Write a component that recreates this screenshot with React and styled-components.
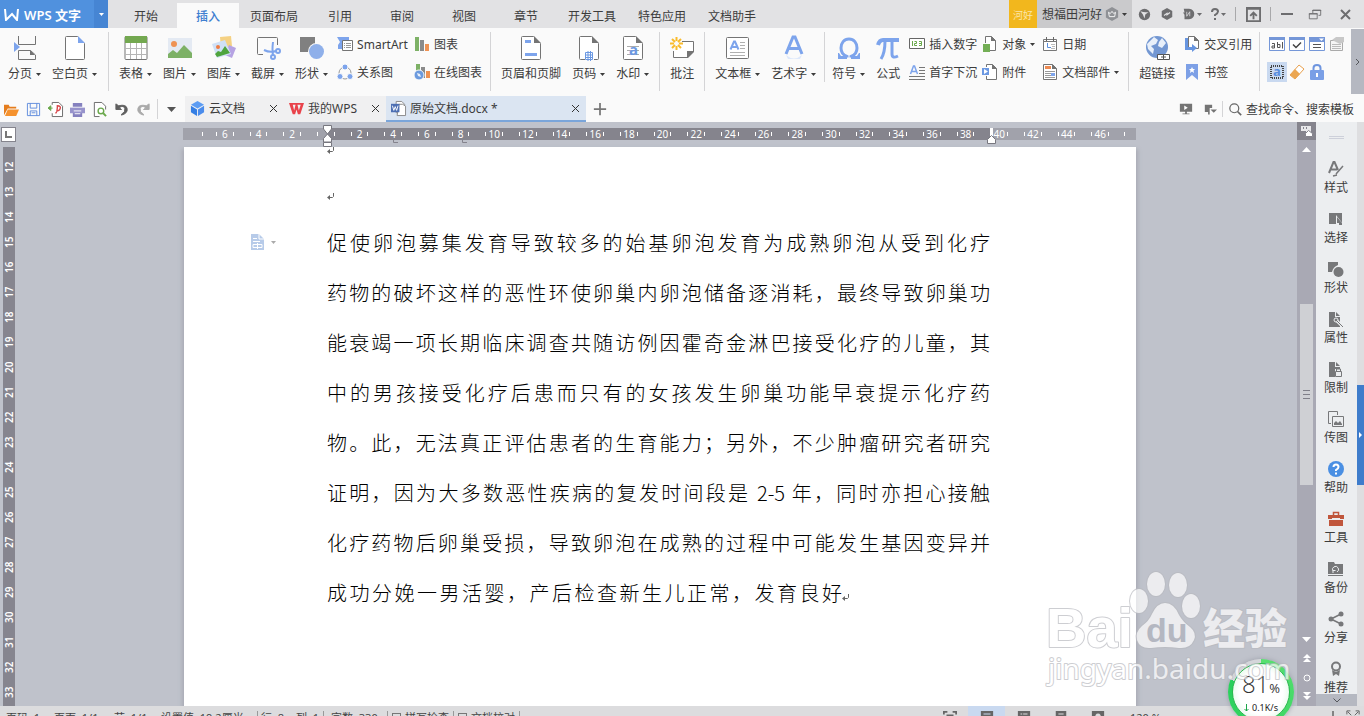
import React, { useState } from 'react'
import styled, { createGlobalStyle } from 'styled-components'

const GlobalStyle = createGlobalStyle`
    * {
        box-sizing: border-box;
    }
    body {
        margin: 0;
        overflow: hidden;
        font-family: "Noto Sans", "Noto Sans CJK SC", sans-serif;
        font-size: 12px;
        color: #3c3c3c;
    }
    button, input {
        font: inherit;
        color: inherit;
        background: none;
        border: 0;
        padding: 0;
        margin: 0;
    }
    svg {
        display: block;
        flex: none;
    }
`

// layout
const Shell = styled.div`
    display: flex;
    flex-direction: column;
    height: 100vh;
    overflow: hidden;
    background: #fafafa;
    white-space: nowrap;
`

const Spacer = styled.div`
    flex: 1;
`

// title bar
const TitleBar = styled.header`
    display: flex;
    flex: none;
    height: 28px;
    background: #e2e2e4;
`

const Brand = styled.button`
    display: flex;
    align-items: center;
    gap: 5px;
    width: 94px;
    padding-left: 4px;
    background: #5091de;
    color: #fff;
    font-size: 13px;
    font-weight: 600;
`

const BrandMenu = styled.button`
    display: flex;
    align-items: center;
    justify-content: center;
    width: 14px;
    background: #4685d3;
    color: #fff;
`

const MenuTabs = styled.nav`
    display: flex;
    align-items: flex-end;
    padding-left: 7px;
`

const MenuTab = styled.button`
    height: 25px;
    width: ${props => (props.$long ? 70 : 62)}px;
    background: ${props => (props.$active ? '#fafafa' : 'transparent')};
    color: ${props => (props.$active ? '#3f7fd0' : '#3c3c3c')};
    font-weight: ${props => (props.$active ? 500 : 400)};
`

const Avatar = styled.div`
    display: flex;
    align-items: center;
    justify-content: center;
    width: 28px;
    background: #f2b71d;
    color: #fbe6ab;
    font-size: 10px;
`

const UserButton = styled.button`
    display: flex;
    align-items: center;
    gap: 3px;
    width: 95px;
    padding-left: 5px;
    background: #cacacc;
`

const WindowTools = styled.div`
    display: flex;
    align-items: center;
    color: #6d6d6f;
`

const WindowButton = styled.button`
    display: flex;
    align-items: center;
    justify-content: center;
    gap: 2px;
    height: 28px;
    width: ${props => props.$w || 24}px;
`

const Line = styled.span`
    flex: none;
    width: 1px;
    height: ${props => props.$h}px;
    margin-left: ${props => props.$gap || 0}px;
    background: ${props => props.$tone || '#d4d4d6'};
`

// ribbon
const Ribbon = styled.div`
    display: flex;
    flex: none;
    height: 68px;
    background: #fafafa;
`

const Group = styled.section`
    display: flex;
    margin: 4px 0;
    height: ${props => (props.$short ? 50 : 59)}px;
    padding: ${props => props.$pad || '0 5px'};
    border-right: 1px solid #d4d4d6;
`

const BigButton = styled.button`
    display: flex;
    flex-direction: column;
    align-items: center;
    height: 50px;
    padding: 3px 6px 0 5px;
    gap: 3px;
`

const BigLabel = styled.span`
    display: flex;
    align-items: center;
    gap: 4px;
    height: 20px;
    line-height: 20px;
`

const SmallColumn = styled.div`
    display: flex;
    flex-direction: column;
    gap: 8px;
    width: ${props => props.$w}px;
    padding-top: 2px;
    ${BigButton} + & {
        padding-left: 3px;
    }
`

const SmallButton = styled.button`
    display: flex;
    align-items: center;
    gap: 4px;
    height: 20px;
`

const ControlGrid = styled.div`
    display: grid;
    grid-template-columns: repeat(4, 20px);
    grid-template-rows: 20px 20px;
    row-gap: 8px;
    align-content: start;
    padding: 6px 0 0 7px;
`

const ControlButton = styled.button`
    display: flex;
    align-items: center;
    justify-content: center;
    height: 20px;
    background: ${props => (props.$active ? '#c9d9f0' : 'transparent')};
`

const RibbonMore = styled.button`
    display: flex;
    align-items: center;
    justify-content: center;
    width: 13px;
    height: 65px;
    margin-top: 1px;
    background: #b5b8c1;
    color: #55575c;
`

// quick access row
const QuickBar = styled.div`
    display: flex;
    flex: none;
    align-items: center;
    height: 26px;
`

const QuickTools = styled.div`
    display: flex;
    align-items: center;
    width: 157px;
`

const QuickButton = styled.button`
    display: flex;
    align-items: center;
    justify-content: center;
    width: ${props => props.$w || 22}px;
    height: 26px;
    color: #555;
`

const DocTab = styled.div`
    display: flex;
    align-items: center;
    gap: 4px;
    width: ${props => props.$w}px;
    height: 26px;
    padding: 0 6px 0 5px;
    background: ${props => (props.$active ? '#dbe5f2' : '#f0f0f1')};
    border-bottom: 2px solid ${props => (props.$active ? '#7aa5da' : '#f0f0f1')};
`

const DocTabName = styled.button`
    flex: 1;
    text-align: left;
`

const SearchLabel = styled.label`
    display: flex;
    align-items: center;
    gap: 4px;
    padding: 0 7px 0 6px;
`

const SearchInput = styled.input`
    width: 111px;
    outline: none;
    &::placeholder {
        color: #3c3c3c;
        opacity: 1;
    }
`

// work area
const WorkArea = styled.div`
    position: relative;
    display: flex;
    flex: none;
    height: calc(100vh - 132px);
    background: #bfc2cb;
`

const LeftRail = styled.div`
    display: flex;
    flex-direction: column;
    width: 23px;
    padding-top: 5px;
`

const TabSelector = styled.button`
    display: flex;
    align-items: center;
    justify-content: center;
    width: 15px;
    height: 15px;
    margin-left: 1px;
    background: #fff;
    border: 1px solid #85848d;
`

const VerticalRuler = styled.div`
    flex: 1;
    width: 12px;
    margin: 5px 0 0 3px;
    padding-top: 8px;
    overflow: hidden;
    background: #86858f;
    color: #fff;
    font-size: 10px;
    font-weight: 600;
`

const VerticalNumber = styled.div`
    display: flex;
    align-items: center;
    justify-content: center;
    height: 25px;
    line-height: 12px;
    writing-mode: vertical-rl;
    transform: rotate(180deg);
`

const Canvas = styled.main`
    display: flex;
    flex: 1;
    flex-direction: column;
    align-items: center;
    overflow: hidden;
`

const RulerRow = styled.div`
    position: relative;
    flex: none;
    width: 954px;
    height: 25px;
    padding: 6px 1px 0 0;
`

const Ruler = styled.div`
    display: flex;
    height: 12px;
    background: linear-gradient(to right, #a1a2ab 144px, #85848d 144px, #85848d 808px, #a1a2ab 808px);
    color: #fff;
    font-size: 10px;
    line-height: 12px;
`

const RulerCell = styled.div`
    display: flex;
    flex: 1 1 0;
    align-items: center;
    justify-content: space-between;
    min-width: 0;
    padding: 0 8px;
    & > span {
        display: flex;
        justify-content: center;
        width: 0;
    }
`

const RulerEnd = styled.div`
    display: flex;
    flex: none;
    align-items: center;
    width: ${props => props.$w}px;
    padding-left: ${props => props.$indent}px;
`

const Tick = styled.i`
    flex: none;
    width: 1px;
    height: 4px;
    background: #fff;
`

const RulerMark = styled.div`
    position: absolute;
    top: ${props => props.$top}px;
    left: ${props => props.$left}px;
`

const Paper = styled.article`
    display: flex;
    flex: 1;
    width: 952px;
    background: #fff;
    box-shadow: 0 4px 4px 2px #a9abb5;
`

const Gutter = styled.div`
    width: 143px;
    padding: 87px 0 0 67px;
`

const GutterButton = styled.button`
    display: flex;
    align-items: center;
    gap: 7px;
`

const Story = styled.div`
    width: 663px;
`

const EmptyLine = styled.div`
    display: flex;
    align-items: ${props => (props.$first ? 'flex-start' : 'center')};
    height: ${props => (props.$first ? 28 : 43)}px;
`

const Paragraph = styled.p`
    margin: 0;
    color: #000;
    font-family: "Noto Sans CJK SC", sans-serif;
    font-size: 20px;
    font-weight: 300;
    line-height: 50px;
`

const TextLine = styled.span`
    display: block;
    text-align: justify;
    text-align-last: justify;
`

const LastLine = styled.span`
    display: flex;
    align-items: center;
    & > span {
        width: 515px;
        text-align: justify;
        text-align-last: justify;
    }
    & > svg {
        margin-top: 10px;
    }
`

// scroll bar
const ScrollTrack = styled.div`
    display: flex;
    flex-direction: column;
    align-items: center;
    width: 19px;
    background: #a9a9b4;
    color: #fff;
`

const RulerToggle = styled.button`
    display: flex;
    align-items: center;
    justify-content: center;
    width: 19px;
    height: 18px;
    background: #85848d;
`

const ScrollButton = styled.button`
    display: flex;
    align-items: center;
    justify-content: center;
    width: 19px;
    height: 19px;
`

const ScrollThumb = styled.div`
    display: flex;
    flex: none;
    flex-direction: column;
    align-items: center;
    justify-content: center;
    gap: 3px;
    width: 13px;
    height: 181px;
    margin-top: 145px;
    background: #cfd0d4;
    & > i {
        width: 7px;
        height: 1px;
        background: #808089;
    }
`

// task pane
const SidePane = styled.aside`
    display: flex;
    flex-direction: column;
    width: 41px;
    overflow: hidden;
    background: #eceef0;
`

const PaneHandle = styled.div`
    flex: none;
    align-self: center;
    width: 15px;
    height: 3px;
    margin: 14px 0 18px 0;
    border: solid #cdd0da;
    border-width: 1px 0;
`

const PaneList = styled.div`
    flex: 1;
    min-height: 0;
    overflow: hidden;
`

const PaneButton = styled.button`
    display: flex;
    flex-direction: column;
    align-items: center;
    width: 40px;
    height: 50px;
    padding-top: 4px;
    gap: 3px;
    line-height: 16px;
    color: #77787a;
    & > span {
        color: #3c3c3c;
    }
`

const PaneMore = styled.button`
    display: flex;
    flex: none;
    align-items: center;
    justify-content: center;
    height: 12px;
    background: #b5b8c1;
    color: #55575c;
`

const EdgeStrip = styled.div`
    width: 7px;
    padding-top: 263px;
    background: #dedee0;
`

const EdgeHandle = styled.button`
    display: flex;
    align-items: center;
    justify-content: center;
    width: 7px;
    height: 100px;
    background: #3e7ccb;
    color: #fff;
`

// things that float over the document
const Watermark = styled.div`
    position: absolute;
    right: 64px;
    bottom: 12px;
    z-index: 3;
    opacity: 0.7;
    pointer-events: none;
`

const SpeedBall = styled.div`
    position: absolute;
    right: 70px;
    bottom: -19px;
    z-index: 2;
    display: flex;
    flex-direction: column;
    align-items: center;
    width: 66px;
    height: 66px;
    padding-top: 12px;
    border-radius: 33px;
    background: conic-gradient(#59e070 0deg, #27cf5b 292deg, #d4d6da 292deg);
    box-shadow: 0 0 5px #9b9ea8;
    &::before {
        content: '';
        position: absolute;
        inset: 4px;
        border-radius: 29px;
        background: radial-gradient(#fff 55%, #c9f5d3 100%);
        border: 1px solid #2cb84f;
    }
`

const SpeedPercent = styled.div`
    position: relative;
    font-family: "Open Sans", sans-serif;
    font-size: 24px;
    font-weight: 300;
    line-height: 26px;
    color: #333;
    & > small {
        font-size: 13px;
        font-weight: 400;
    }
`

const SpeedRate = styled.div`
    position: relative;
    display: flex;
    gap: 3px;
    align-items: center;
    font-size: 9px;
    line-height: 14px;
    color: #222;
`

// status bar
const StatusBar = styled.footer`
    display: flex;
    flex: none;
    align-items: center;
    height: 22px;
    padding: 0 4px 0 6px;
    background: #dcdcde;
    font-size: 11px;
    color: #444;
`

const StatusText = styled.span`
    width: ${props => props.$w}px;
    margin-left: ${props => props.$gap || 0}px;
`

const StatusCheck = styled.button`
    display: flex;
    align-items: center;
    gap: 4px;
    padding: 0 4px;
    &::before {
        content: '';
        width: 7px;
        height: 7px;
        border: 1px solid #777;
    }
`

const ViewButton = styled.button`
    display: flex;
    align-items: center;
    justify-content: center;
    width: 37px;
    height: 22px;
    color: #666;
    background: ${props => (props.$active ? '#c9d9f0' : 'transparent')};
`

const ZoomButton = styled.button`
    margin-right: 6px;
`

const Caret = ({ size = 5 }) => (
    <svg width={size} height={Math.ceil(size / 2)} viewBox="0 0 6 3" preserveAspectRatio="none" fill="currentColor">
        <path d="M0 0h6L3 3z" />
    </svg>
)

const Close = () => (
    <svg width="9" height="9" viewBox="0 0 9 9" stroke="#333" fill="none">
        <path d="M1 1l7 7M8 1l-7 7" />
    </svg>
)

const ReturnMark = () => (
    <svg width="8" height="8" viewBox="0 0 8 8" fill="none" stroke="#666">
        <path d="M6.500 0v3.500L5.500 4.500H1" />
        <path d="M3 2v5L0 4.500z" fill="#666" stroke="none" />
    </svg>
)

const BLUE = '#7da4ec'
const GREY = '#747474'

// 24 x 26 drawings of the large ribbon buttons
const bigIcons = {
    pageBreak: <>
        <path d="M5.500 1v8.500h17V1M5.500 24.500v-9h12l5 4.500v4.500z" fill="none" stroke={GREY} />
        <path d="M17 15v5h5z" fill={GREY} />
        <path d="M1 7l6 5-6 5z" fill={BLUE} />
    </>,
    blank: <>
        <path d="M3.500 1.500h11l7 7v15q0 1-1 1h-17q-1 0-1-1v-21q0-1 1-1z" fill="#fff" stroke={GREY} />
        <path d="M15 1v7h7z" fill={BLUE} />
    </>,
    table: <>
        <rect x="1" y="1.500" width="22" height="23" rx="1" fill="#fff" stroke={GREY} />
        <path d="M1 1h22v7H1z" fill="#73a850" />
        <path d="M1 13.500h22M1 19.500h22M6.500 8v16M12.500 8v16M17.500 8v16" stroke="#b5b5b5" />
    </>,
    picture: <>
        <path d="M0 3h24v20H0z" fill="#e4eaf3" />
        <circle cx="6" cy="9" r="3" fill="#ee9253" />
        <path d="M0 23v-4l5-4 4 3 7-8 8 8v5z" fill="#7db166" />
    </>,
    gallery: <>
        <path d="M8 2l11-1 1 10-11 3z" fill="#f5d183" />
        <path d="M17 10l7 3-4 10-7-3z" fill="#b6a3e3" />
        <path d="M0 9l13-4 6 14-14 4z" fill="#cfe0f6" />
        <circle cx="6" cy="12" r="2" fill="#ee7b43" />
        <path d="M3 19l3-3 3 1 4-6 5 7-13 4z" fill="#4fa43e" />
    </>,
    capture: <>
        <path d="M7 19.500H2.500q-1 0-1-1v-15q0-1 1-1h18q1 0 1 1V10" fill="none" stroke={GREY} />
        <g fill="none" stroke={BLUE} strokeWidth="2">
            <path d="M8 15q6 3 12 1M17 7q-1 8 0 13" />
            <circle cx="17" cy="22" r="2" />
            <circle cx="22" cy="16" r="2" />
        </g>
    </>,
    shapes: <>
        <path d="M0 2h15v15H0z" fill="#808080" />
        <circle cx="16.500" cy="16.500" r="8.500" fill="#fafafa" />
        <circle cx="16.500" cy="16.500" r="7.500" fill="#8fb0ea" />
    </>,
    headerFooter: <>
        <path d="M3.500 1.500h11l7 7v15q0 1-1 1h-17q-1 0-1-1v-21q0-1 1-1z" fill="#fff" stroke={GREY} />
        <path d="M15 1v7h7z" fill={GREY} />
        <path d="M6 5h6v3H6zM6 18h12v3H6z" fill={BLUE} />
    </>,
    pageNumber: <>
        <path d="M8 24.500H3.500q-1 0-1-1v-21q0-1 1-1h11l7 7v15q0 1-1 1H17" fill="#fff" stroke={GREY} />
        <path d="M15 1v7h7z" fill={GREY} />
        <path d="M8.500 17.500h7v7h-7zM11 16v10M13.500 16v10M8 20h8M8 22.500h8" fill="none" stroke="#6b98e2" />
    </>,
    stamp: <>
        <path d="M3.500 1.500h11l7 7v15q0 1-1 1h-17q-1 0-1-1v-21q0-1 1-1z" fill="#fff" stroke={GREY} />
        <path d="M15 1v7h7z" fill={GREY} />
        <path d="M6 11.500h12M6 15.500h12M6 19.500h12" stroke="#ababab" />
        <text x="8" y="20" fontSize="15" fontWeight="700" fontFamily="Noto Sans" fill="#6b98e2">a</text>
    </>,
    comment: <>
        <path d="M12 6.500h11.500v10l-6 6H3.500V16" fill="#fff" stroke={GREY} />
        <path d="M24 16v1l-6 6h-1v-7z" fill={GREY} />
        <path d="M6.500 2v4M6.500 11v4M0 8.500h4M9 8.500h4M2 4l3 3M8 10l3 3M11 4L8 7M5 10l-3 3" stroke="#f9bb2c" strokeWidth="2" />
    </>,
    textBox: <>
        <rect x=".5" y="2.500" width="22" height="21" rx="1" fill="#fff" stroke={GREY} />
        <path d="M14 7.500h5M14 10.500h5M14 13.500h5M4 17.500h15M4 20.500h15" stroke="#b0b0b0" />
        <path d="M4.500 14.500l3.500-8h1l3.500 8M6 12h5" fill="none" stroke={BLUE} strokeWidth="2" />
    </>,
    wordArt: <>
        <path d="M4 19L11 2h2l7 17M7 13.500h10" fill="none" stroke={BLUE} strokeWidth="3" />
        <path d="M4 20q8 7 16 0l-2 4H6z" fill="#dde8fb" />
    </>,
    symbol: <>
        <path d="M10 22.500v-1C6 20 4 17 4 13c0-5 3-9 8-9s8 4 8 9c0 4-2 7-6 8.500v1" fill="none" stroke={BLUE} strokeWidth="3" />
        <path d="M1 18h1l2 3h6v3H1zM23 18h-1l-2 3h-6v3h9z" fill={BLUE} />
    </>,
    formula: <>
        <path d="M2 10Q3.500 5 7 5h16" fill="none" stroke={BLUE} strokeWidth="4" />
        <path d="M9 6q0 12-4 18M16 6v13q0 5 6 2" fill="none" stroke={BLUE} strokeWidth="3" />
    </>,
    hyperlink: <>
        <circle cx="12" cy="12" r="11" fill="#7397d2" />
        <path d="M9 2l4 3-2 4-5 2 3 3-1 5-5-5-1-5zM17 3l4 5-4 5-4-2 1-4z" fill="#e9f0fa" />
        <path d="M12.500 19.500h6v5h-6zM18.500 19.500h6v5h-6zM16 22h5" fill="#fff" stroke="#555" />
    </>,
}

// 16 x 16 drawings
const smallIcons = {
    smartArt: <>
        <path d="M0 1h12v3H7L5 9v4H1V9l2-3z" fill={BLUE} />
        <path d="M5.500 4.500h10v10h-10z" fill="#fff" stroke={GREY} />
        <path d="M7 7.500h1M9 7.500h5M7 9.500h1M9 9.500h5M7 11.500h1M9 11.500h5" stroke="#999" />
    </>,
    relation: <>
        <circle cx="8" cy="9" r="6" fill="none" stroke="#999" />
        <g fill={BLUE} stroke="#fafafa"><circle cx="8" cy="3" r="3" /><circle cx="3" cy="12.500" r="3" /><circle cx="13" cy="12.500" r="3" /></g>
    </>,
    chart: <>
        <path d="M1 1h4v14H1z" fill="#7db166" /><path d="M6 4h4v11H6z" fill="#8a8a8a" /><path d="M11 8h4v7h-4z" fill="#ee9253" />
    </>,
    onlineChart: <>
        <path d="M2 0h4v14H2z" fill="#7db166" /><path d="M7 3h4v11H7z" fill="#8a8a8a" /><path d="M12 7h4v7h-4z" fill="#ee9253" />
        <circle cx="5" cy="11" r="5" fill="#6b9ade" stroke="#fafafa" />
        <path d="M3 9l3 1 1 3-3-1z" fill="#e9f0fa" />
    </>,
    number: <>
        <path d="M.5 2.500h15v10H.5z" fill="#fff" stroke="#666" />
        <path d="M3.500 5v5M5.500 5.500h2v2h-2v2h2.500M10 5.500h2.500v4H10M10 7.500h2" fill="none" stroke="#6aa84b" />
    </>,
    dropCap: <>
        <path d="M1.500 10l3-8h1l3 8M3 7.500h4" fill="none" stroke={BLUE} strokeWidth="1.500" />
        <path d="M10 3.500h6M10 6.500h6M10 9.500h6M0 12.500h16M0 15.500h16" stroke="#777" />
    </>,
    object: <>
        <path d="M3.500 7V.5h6l4 4v10H8" fill="#fff" stroke={GREY} /><path d="M9 0v5h5z" fill={GREY} />
        <path d="M1 8h7v8H1z" fill="#73ae55" />
    </>,
    attach: <>
        <path d="M4.500 3V.5h6l4 4v11h-10V12" fill="#fff" stroke={GREY} /><path d="M10 0v5h5z" fill={GREY} />
        <path d="M0 4h7v7H0z" fill="#6b98e2" /><path d="M2 5l4 2.500L2 10z" fill="#fff" />
    </>,
    date: <>
        <path d="M1.500 3.500h13v11h-13zM1 5.500h14" fill="#fff" stroke="#777" /><path d="M4.500 1v4M11.500 1v4" stroke="#666" />
        <path d="M5.500 7v4.500H9" fill="none" stroke="#5b8fdd" /><path d="M9 8.500h4M10 10.500h3M9 12.500h4" stroke="#bbb" />
    </>,
    docParts: <>
        <path d="M1.500.5h9l4 4v11h-13z" fill="#fff" stroke={GREY} /><path d="M10 0v5h5z" fill={GREY} />
        <path d="M3 2h6v3H3z" fill="#ee8a52" /><path d="M3 7.500h10M3 9.500h6M3 11.500h6M3 13.500h10" stroke="#999" /><path d="M9 9h4v3H9z" fill={BLUE} />
    </>,
    crossRef: <>
        <path d="M4.500.5h6l4 4v8h-10z" fill="#fff" stroke={GREY} /><path d="M10 0v5h5z" fill={GREY} />
        <path d="M1 2h3v9h4V8l5 4-5 4v-2H1z" fill="#6795e0" />
    </>,
    bookmark: <>
        <path d="M2 0h12v16l-6-5-6 5z" fill="#7da0e6" /><path d="M8 3l1 2h2L9.500 6.500 10 9 8 7.500 6 9l.5-2.500L5 5h2z" fill="#fff" />
    </>,
    editField: <>
        <path d="M.5 1.500h15v13H.5z" fill="#fff" stroke="#7597d8" /><path d="M0 1h16v3H0z" fill="#7597d8" />
        <path d="M3 7.500h2.500V12H3v-2h2M8.500 6v5.500H11v-3H9M13.500 6v6.500" fill="none" stroke="#555" />
    </>,
    checkField: <>
        <path d="M.5 1.500h15v13H.5z" fill="#fff" stroke="#7597d8" /><path d="M0 1h16v3H0z" fill="#7597d8" />
        <path d="M4 8.500l3 3 5-5" fill="none" stroke="#444" strokeWidth="1.500" />
    </>,
    listField: <>
        <path d="M.5 1.500h15v13H.5z" fill="#fff" stroke="#7597d8" /><path d="M0 1h16v5H0z" fill="#7597d8" /><path d="M10 2.500h5l-2.500 2.500z" fill="#fff" />
        <path d="M4 8.500h8M4 11.500h8" stroke="#555" />
    </>,
    fieldOptions: <>
        <path d="M1.500 4.500h12v10h-12z" fill="#f6f6f6" stroke="#aaa" /><path d="M3 8.500h9M3 10.500h9M3 12.500h9" stroke="#bbb" />
        <path d="M3 4l4-3h8v5l-4 2z" fill="#c8c8c8" />
    </>,
    shadeField: <>
        <rect x="2" y="2" width="12" height="12" fill="none" stroke="#444" strokeWidth="2" strokeDasharray="1 1" />
        <text x="4" y="12" fontSize="13" fontFamily="Noto Sans" fontWeight="700" fill="#5a8ddd">a</text>
    </>,
    eraser: <>
        <path d="M10 1l5 4-9 10-5-4z" fill="#fff" stroke="#e9a04c" /><path d="M6 5l5 5-5 5-5-4z" fill="#eba652" />
    </>,
    lock: <>
        <path d="M4.500 8V4q0-3 3.500-3t3.500 3v4" fill="none" stroke="#6e95df" strokeWidth="2" />
        <rect x="1" y="6" width="14" height="10" rx="1" fill="#7a9fe6" /><path d="M7 9h2v4H7z" fill="#fff" />
    </>,
    open: <>
        <path d="M0 14V3h5l1 2h7v2H4z" fill="#e57d1d" /><path d="M4 8h12l-3 7H1z" fill="#f5922e" />
    </>,
    save: <>
        <path d="M1.500 1.500h13v13h-13zM4.500 1.500v5h7v-5M4.500 14.500v-5h7v5" fill="none" stroke="#5e8bdc" /><path d="M6 11.500h4" stroke="#5e8bdc" />
    </>,
    pdf: <>
        <path d="M4.500 3V.5h7l4 4v11h-11V12" fill="#fff" stroke="#666" /><path d="M1 6.500h4M3 4L0 6.500 3 9z" fill="#6aa84b" stroke="#6aa84b" />
        <path d="M8 12q2-1 2-8 4 0 3 3t-4 2" fill="none" stroke="#d9484b" strokeWidth="1.500" />
    </>,
    print: <>
        <path d="M3 1h10v4H3zM3 11h10v5H3z" fill="#8581bf" /><path d="M0 6h16v6H0z" fill="#9793cc" /><path d="M4 9.500h8M5 12.500h6" stroke="#fff" />
    </>,
    preview: <>
        <path d="M8 15.500H2.500V.5h8l4 4V8" fill="#fff" stroke="#666" /><circle cx="9.500" cy="9.500" r="3" fill="none" stroke="#6aa84b" strokeWidth="1.500" /><path d="M12 12l3 3" stroke="#6aa84b" strokeWidth="2" />
    </>,
    undo: <path d="M2 2v6h6L5.500 6q5-3 6 1T8 13v1q7-2 6-7T5 4z" fill="#5f5f5f" stroke="#5f5f5f" />,
    redo: <path d="M14 2v6H8l2.500-2q-5-3-6 1T8 13v1Q1 12 2 7t9-3z" fill="#aaa" stroke="#aaa" />,
    cube: <>
        <path d="M8 0l7 4-7 4-7-4z" fill="#5c9cf3" /><path d="M1 5l6.500 4v7L1 12z" fill="#347ee4" /><path d="M15 5L8.500 9v7l6.500-4z" fill="#4a8cec" />
    </>,
    wpsRed: <path d="M0 2h16l-4 12H9.500L8 9l-1.500 5H4zM4 4l1.500 6L7 4zM9 4l1.500 6L12.500 4z" fill="#e9424a" fillRule="evenodd" />,
    wordDoc: <>
        <path d="M5.500 2.500v-2h6l3 3v9h-9z" fill="#fff" stroke="#888" /><path d="M8.500 3.500h4l3 2v10h-9z" fill="#fff" stroke="#888" />
        <path d="M0 3h9v9H0z" fill="#4d6fb3" /><path d="M1.500 5l1.500 5 1.500-4L6 10l1.500-5" stroke="#fff" fill="none" />
    </>,
    present: <><path d="M1 2h14v9H1zM7 11h2v3H7zM4 13h8v1H4z" fill="#747474" /><path d="M6 4l4 2.500L6 9z" fill="#fff" /></>,
    layout: <path d="M1 2h9v4H7v5H1zM8 8h8l-4 4zM5 11v3h2v-3z" fill="#747474" />,
    search: <><circle cx="6.500" cy="6.500" r="5.500" fill="none" stroke="#666" strokeWidth="1.500" /><path d="M10.500 10.500L15 15" stroke="#666" strokeWidth="2" /></>,
    crown: <>
        <path d="M8 0l7 4v8l-7 4-7-4V4z" fill="#8f9195" /><path d="M4 6l2 1.500L8 5l2 2.500L12 6l-1 5H5z" fill="none" stroke="#fff" />
    </>,
    skin: <><circle cx="8" cy="8" r="7" fill="#6d6d6f" /><path d="M3 4q5 2 10 1L9 8l-1 5-2-5z" fill="#e2e2e4" /></>,
    hex: <><path d="M8 0l7 4v8l-7 4-7-4V4z" fill="#6d6d6f" /><path d="M4 10l4-3v2l4-3" fill="none" stroke="#e2e2e4" strokeWidth="1.500" /></>,
    docer: <><path d="M1 1h7q7 1 7 7t-7 7H2V9L0 6h2z" fill="#6d6d6f" /><path d="M5 5v6l4-6v6" fill="none" stroke="#e2e2e4" /></>,
    collapse: <path d="M1 1v14h14V1zM0 2h16M8 13V6M4.500 9.500L8 6l3.500 3.500" fill="none" stroke="currentColor" strokeWidth="2" />,
    restore: <><path d="M5.500 7V3.500h9v6H12M5 4h10" fill="none" stroke="currentColor" /><path d="M1.500 7.500h9v6h-9zM1 8h10" fill="none" stroke="currentColor" /></>,
    style: <><path d="M1 12L5.500 1h1L10 9M3 8.500h6" fill="none" stroke="currentColor" strokeWidth="2" /><path d="M8 13l7-8M5 15l4-1" stroke="currentColor" strokeWidth="1.500" /></>,
    select: <><path d="M1 2h13v11H1z" fill="currentColor" /><path d="M8 4v11l3-2h4z" fill="#eceef0" /><path d="M9 6l5 6H9zM11 12h3v2h-3z" fill="currentColor" /></>,
    shape: <><path d="M0 1h10v3q-5 2-6 7H0z" fill="currentColor" /><circle cx="10.500" cy="11" r="5" fill="currentColor" /></>,
    property: <><path d="M1 1h6v5h5v10H1zM8 1l4 4H8z" fill="currentColor" /><circle cx="8" cy="9" r="2" fill="none" stroke="#eceef0" /><path d="M9 10l6 6" stroke="#eceef0" strokeWidth="3" /><path d="M9 10l6 6" stroke="currentColor" /></>,
    restrict: <><path d="M1 1h6v5h5v2H7v8H1zM8 1l4 4H8z" fill="currentColor" /><path d="M7.500 10.500h6v5h-6zM8.500 10V8h4v2" fill="none" stroke="currentColor" /></>,
    transfer: <><path d="M3 12.500H.5v-12h9V4" fill="none" stroke="currentColor" /><path d="M4.500 5.500h11v10h-11z" fill="none" stroke="currentColor" /><path d="M6 14v-2l2-2 2 2 2-2 2 3v1z" fill="currentColor" /></>,
    help: <><circle cx="8" cy="8" r="8" fill="#4a8fe3" /><path d="M5.500 6q0-2.500 2.500-2.500T10.500 6Q10.500 7.500 8 9v1M8 11.500v2" fill="none" stroke="#fff" strokeWidth="2" /></>,
    tools: <><path d="M5.500 4V1.500h5V4" fill="none" stroke="#c0563c" strokeWidth="1.500" /><path d="M0 4h16v4H0zM1 9h14v6H1z" fill="#c0563c" /><path d="M4 7h8v2H4z" fill="#eceef0" /></>,
    backup: <><path d="M0 1h6l1 2h8v10H0zM0 14h15v1H0z" fill="currentColor" /><path d="M5 10a3 3 0 1 1 4 1M5 12V9.500h2.500" fill="none" stroke="#eceef0" /></>,
    share: <><path d="M3 8l10-5M3 8l10 5" stroke="currentColor" strokeWidth="1.500" /><circle cx="3" cy="8" r="2.500" fill="currentColor" /><circle cx="13" cy="3" r="2.500" fill="currentColor" /><circle cx="13" cy="13" r="2.500" fill="currentColor" /></>,
    recommend: <><circle cx="8" cy="5.500" r="4" fill="none" stroke="currentColor" strokeWidth="2" /><path d="M4 9l1 6 3-2 3 2 1-6-4 2z" fill="currentColor" /></>,
    fullView: <path d="M1 5V2h4M11 2h4v3M1 11v3h14v-3M5 6h6v4H5z" fill="none" stroke="currentColor" strokeWidth="2" />,
    printView: <path d="M1 1h14v15H1zM4 4h8v1H4zM4 7h8v1H4z" fill="currentColor" fillRule="evenodd" />,
    outline: <path d="M1 1h14v15H1zM4 4h2v1H4zM7 4h5v1H7zM4 7h2v1H4zM7 7h5v1H7z" fill="currentColor" fillRule="evenodd" />,
    web: <path d="M2 1h12v15H2zM5 4h6v1H5z" fill="currentColor" fillRule="evenodd" />,
    eye: <path d="M1 1h14v15H1zM8 4a3 3 0 1 0 .1 0z" fill="currentColor" fillRule="evenodd" />,
    expand: <path d="M1 5V1h4M11 1h4v4M2 2l4 4M14 2l-4 4" fill="none" stroke="#555" />,
    plus: <path d="M8 1v14M1 8h14" stroke="#777" strokeWidth="2" />,
}

const BigIcon = ({ name }) => (
    <svg width="24" height="26" viewBox="0 0 24 26" overflow="visible">{bigIcons[name]}</svg>
)

const Icon = ({ name, size = 16 }) => (
    <svg width={size} height={size} viewBox="0 0 16 16" overflow="visible">{smallIcons[name]}</svg>
)

const Big = ({ icon, label, menu }) => (
    <BigButton>
        <BigIcon name={icon} />
        <BigLabel>{label}{menu && <Caret />}</BigLabel>
    </BigButton>
)

const Small = ({ icon, label, menu }) => (
    <SmallButton>
        <Icon name={icon} />
        <span>{label}</span>
        {menu && <Caret />}
    </SmallButton>
)

const menuTabs = ['开始', '插入', '页面布局', '引用', '审阅', '视图', '章节', '开发工具', '特色应用', '文档助手']

const quickTools = [
    ['open', '打开'], ['save', '保存'], ['pdf', '输出为PDF'], ['print', '打印'],
    ['preview', '打印预览'], ['undo', '撤销'], ['redo', '恢复'],
]

const controls = [
    ['editField', '文字型窗体域'], ['checkField', '复选框型窗体域'], ['listField', '下拉型窗体域'], ['fieldOptions', '窗体域选项'],
    ['shadeField', '窗体域底纹'], ['eraser', '重新设置窗体域'], ['lock', '保护窗体'],
]

const paneItems = [
    ['style', '样式'], ['select', '选择'], ['shape', '形状'], ['property', '属性'], ['restrict', '限制'], ['transfer', '传图'],
    ['help', '帮助'], ['tools', '工具'], ['backup', '备份'], ['share', '分享'], ['recommend', '推荐'],
]

const storyLines = [
    '促使卵泡募集发育导致较多的始基卵泡发育为成熟卵泡从受到化疗',
    '药物的破坏这样的恶性环使卵巢内卵泡储备逐消耗，最终导致卵巢功',
    '能衰竭一项长期临床调查共随访例因霍奇金淋巴接受化疗的儿童，其',
    '中的男孩接受化疗后患而只有的女孩发生卵巢功能早衰提示化疗药',
    '物。此，无法真正评估患者的生育能力；另外，不少肿瘤研究者研究',
    '证明，因为大多数恶性疾病的复发时间段是 2-5 年，同时亦担心接触',
    '化疗药物后卵巢受损，导致卵泡在成熟的过程中可能发生基因变异并',
]

const rulerNumbers = Array.from({ length: 27 }, (_, i) => i * 2 - 6)
const verticalNumbers = Array.from({ length: 22 }, (_, i) => i + 12)

const RibbonPanel = () => (
    <Ribbon>
        <Group $pad="0 5px 0 3px">
            <Big icon="pageBreak" label="分页" menu />
            <Big icon="blank" label="空白页" menu />
        </Group>
        <Group $pad="0 7px 0 5px">
            <Big icon="table" label="表格" menu />
            <Big icon="picture" label="图片" menu />
            <Big icon="gallery" label="图库" menu />
            <Big icon="capture" label="截屏" menu />
            <Big icon="shapes" label="形状" menu />
            <SmallColumn $w={80}>
                <Small icon="smartArt" label="SmartArt" />
                <Small icon="relation" label="关系图" />
            </SmallColumn>
            <SmallColumn $w={69}>
                <Small icon="chart" label="图表" />
                <Small icon="onlineChart" label="在线图表" />
            </SmallColumn>
        </Group>
        <Group $pad="0 4px 0 5px">
            <Big icon="headerFooter" label="页眉和页脚" />
            <Big icon="pageNumber" label="页码" menu />
            <Big icon="stamp" label="水印" menu />
        </Group>
        <Group $pad="0 4px 0 5px">
            <Big icon="comment" label="批注" />
        </Group>
        <Group $short $pad="0 2px 0 5px">
            <Big icon="textBox" label="文本框" menu />
            <Big icon="wordArt" label="艺术字" menu />
        </Group>
        <Group $pad="0 6px 0 2px">
            <Big icon="symbol" label="符号" menu />
            <Big icon="formula" label="公式" />
            <SmallColumn $w={76}>
                <Small icon="number" label="插入数字" />
                <Small icon="dropCap" label="首字下沉" />
            </SmallColumn>
            <SmallColumn $w={60}>
                <Small icon="object" label="对象" menu />
                <Small icon="attach" label="附件" />
            </SmallColumn>
            <SmallColumn $w={80}>
                <Small icon="date" label="日期" />
                <Small icon="docParts" label="文档部件" menu />
            </SmallColumn>
        </Group>
        <Group>
            <Big icon="hyperlink" label="超链接" />
            <SmallColumn $w={73}>
                <Small icon="crossRef" label="交叉引用" />
                <Small icon="bookmark" label="书签" />
            </SmallColumn>
        </Group>
        <ControlGrid>
            {controls.map(([icon, label]) => (
                <ControlButton key={icon} aria-label={label} $active={icon === 'shadeField'}>
                    <Icon name={icon} />
                </ControlButton>
            ))}
        </ControlGrid>
        <Spacer />
        <RibbonMore aria-label="更多">
            <svg width="5" height="8" viewBox="0 0 5 8" fill="none" stroke="currentColor"><path d="M1 1l3 3-3 3" /></svg>
        </RibbonMore>
    </Ribbon>
)

const TabStop = () => (
    <svg width="5" height="4" viewBox="0 0 5 4" fill="none" stroke="#85848d"><path d="M.5 0v3.500H5" /></svg>
)

const Rulers = () => (
    <RulerRow>
        <Ruler>
            <RulerEnd $w={25} $indent={19}><Tick /></RulerEnd>
            {rulerNumbers.map(n => (
                <RulerCell key={n}>
                    <Tick />
                    <span>{n === 0 ? '' : Math.abs(n)}</span>
                    <Tick />
                </RulerCell>
            ))}
            <RulerEnd $w={19} $indent={7}><Tick /></RulerEnd>
        </Ruler>
        <RulerMark $top={3} $left={140}>
            <svg width="9" height="22" viewBox="0 0 9 22" fill="#fff" stroke="#77777f">
                <path d="M.5.500h8V4l-4 5-4-5zM4.500 9l4 4.500V17h-8v-3.500zM.5 17.500h8v4h-8z" />
            </svg>
        </RulerMark>
        <RulerMark $top={6} $left={804}>
            <svg width="9" height="16" viewBox="0 0 9 16" fill="#fff" stroke="#77777f">
                <path d="M3 0h3v8H3z" stroke="none" />
                <path d="M4.500 7.500l4 4v4h-8v-4z" />
            </svg>
        </RulerMark>
        <RulerMark $top={17} $left={210}><TabStop /></RulerMark>
        <RulerMark $top={17} $left={279}><TabStop /></RulerMark>
    </RulerRow>
)

const BaiduMark = () => (
    <Watermark>
        <svg width="256" height="124" viewBox="0 0 256 124" fill="#fff">
            <g stroke="#b9bac0" strokeWidth="2" paintOrder="stroke" strokeLinejoin="round">
                <text x="2" y="77" fontFamily="Liberation Sans" fontWeight="700" fontSize="56">Bai</text>
                <ellipse cx="95" cy="31" rx="9" ry="12" />
                <ellipse cx="112" cy="14" rx="9" ry="12" />
                <ellipse cx="134" cy="15" rx="9" ry="12" />
                <ellipse cx="147" cy="36" rx="9" ry="12" />
                <path d="M121 33q9 0 14 12 4 7 11 12 7 6 4 13-4 9-15 8-14-2-28 0-11 1-14-8-2-8 5-14 7-5 10-12 5-11 13-11z" />
                <text x="159" y="74" fontFamily="Noto Sans CJK SC" fontWeight="900" fontSize="42">经验</text>
                <text x="4" y="109" fontFamily="Noto Sans" fontSize="28">jingyan.baidu.com</text>
            </g>
            <text x="102" y="72" fontFamily="Liberation Sans" fontWeight="700" fontSize="34" fill="#b0b3be">du</text>
        </svg>
    </Watermark>
)

const App = () => {
    const [activeTab, setActiveTab] = useState('插入')
    const [search, setSearch] = useState('')

    return (
        <Shell>
            <GlobalStyle />
            <TitleBar>
                <Brand>
                    <svg width="15" height="13" viewBox="0 0 15 13" fill="none" stroke="#fff" strokeWidth="2">
                        <path d="M1 1l1 11 6-6 5 6 1-11" />
                    </svg>
                    WPS 文字
                </Brand>
                <BrandMenu aria-label="菜单"><Caret /></BrandMenu>
                <MenuTabs>
                    {menuTabs.map(tab => (
                        <MenuTab
                            key={tab}
                            $long={tab.length > 2}
                            $active={tab === activeTab}
                            onClick={() => setActiveTab(tab)}
                        >
                            {tab}
                        </MenuTab>
                    ))}
                </MenuTabs>
                <Spacer />
                <Avatar>河好</Avatar>
                <UserButton>想福田河好<Icon name="crown" size={14} /><Caret /></UserButton>
                <WindowTools>
                    <WindowButton aria-label="皮肤"><Icon name="skin" size={13} /></WindowButton>
                    <WindowButton $w={22} aria-label="云服务"><Icon name="hex" size={12} /></WindowButton>
                    <WindowButton $w={28} aria-label="稻壳"><Icon name="docer" size={12} /><Caret /></WindowButton>
                    <WindowButton aria-label="帮助">
                        <svg width="8" height="12" viewBox="0 0 8 12" fill="none" stroke="currentColor" strokeWidth="2">
                            <path d="M1 4q0-3 3-3t3 2.500Q7 5 4 7v1M4 10v2" />
                        </svg>
                        <Caret />
                    </WindowButton>
                    <Line $h={14} $gap={5} $tone="#a8a8aa" />
                    <WindowButton $w={34} aria-label="折叠功能区"><Icon name="collapse" size={15} /></WindowButton>
                    <Line $h={14} $tone="#a8a8aa" />
                    <WindowButton $w={32} aria-label="最小化">
                        <svg width="12" height="2" viewBox="0 0 12 2"><path d="M0 0h12v2H0z" fill="currentColor" /></svg>
                    </WindowButton>
                    <WindowButton $w={24} aria-label="还原"><Icon name="restore" size={14} /></WindowButton>
                    <WindowButton $w={37} aria-label="关闭">
                        <svg width="11" height="11" viewBox="0 0 11 11" stroke="currentColor" strokeWidth="2"><path d="M1 1l9 9M10 1l-9 9" /></svg>
                    </WindowButton>
                </WindowTools>
            </TitleBar>

            <RibbonPanel />

            <QuickBar>
                <QuickTools>
                    {quickTools.map(([icon, label]) => (
                        <QuickButton key={icon} aria-label={label}><Icon name={icon} size={15} /></QuickButton>
                    ))}
                </QuickTools>
                <Line $h={20} />
                <QuickButton $w={27} aria-label="自定义"><Caret size={9} /></QuickButton>
                <DocTab $w={99}>
                    <Icon name="cube" size={15} />
                    <DocTabName>云文档</DocTabName>
                    <button aria-label="关闭云文档"><Close /></button>
                </DocTab>
                <DocTab $w={102}>
                    <Icon name="wpsRed" size={15} />
                    <DocTabName>我的WPS</DocTabName>
                    <button aria-label="关闭我的WPS"><Close /></button>
                </DocTab>
                <DocTab $w={200} $active>
                    <Icon name="wordDoc" size={15} />
                    <DocTabName>原始文档.docx *</DocTabName>
                    <button aria-label="关闭原始文档"><Close /></button>
                </DocTab>
                <QuickButton $w={27} aria-label="新建"><Icon name="plus" size={14} /></QuickButton>
                <Spacer />
                <QuickButton $w={24} aria-label="演示"><Icon name="present" size={14} /></QuickButton>
                <QuickButton $w={24} aria-label="版式"><Icon name="layout" size={13} /></QuickButton>
                <Line $h={16} />
                <SearchLabel>
                    <Icon name="search" size={13} />
                    <SearchInput
                        aria-label="查找命令、搜索模板"
                        value={search}
                        onChange={e => setSearch(e.target.value)}
                        placeholder="查找命令、搜索模板"
                    />
                </SearchLabel>
            </QuickBar>

            <WorkArea>
                <LeftRail>
                    <TabSelector aria-label="制表符">
                        <svg width="7" height="7" viewBox="0 0 7 7" fill="none" stroke="#777" strokeWidth="2"><path d="M1 0v6h6" /></svg>
                    </TabSelector>
                    <VerticalRuler>
                        {verticalNumbers.map(n => <VerticalNumber key={n}>{n}</VerticalNumber>)}
                    </VerticalRuler>
                </LeftRail>
                <Canvas>
                    <Rulers />
                    <Paper>
                        <Gutter>
                            <GutterButton aria-label="段落布局">
                                <svg width="13" height="16" viewBox="0 0 13 16">
                                    <path d="M0 0h8l5 5v11H0z" fill="#b7cbe9" />
                                    <path d="M8 0v5h5M2 4.500h4M2 7.500h7M2 10.500h9v3H2zM6.500 9v6" fill="none" stroke="#fff" />
                                </svg>
                                <svg width="5" height="3" viewBox="0 0 5 3"><path d="M0 0h5L2.500 3z" fill="#aaa" /></svg>
                            </GutterButton>
                        </Gutter>
                        <Story>
                            <EmptyLine $first><ReturnMark /></EmptyLine>
                            <EmptyLine><ReturnMark /></EmptyLine>
                            <Paragraph>
                                {storyLines.map(line => <TextLine key={line}>{line}</TextLine>)}
                                <LastLine>
                                    <span>成功分娩一男活婴，产后检查新生儿正常，发育良好</span>
                                    <ReturnMark />
                                </LastLine>
                            </Paragraph>
                        </Story>
                    </Paper>
                </Canvas>
                <ScrollTrack>
                    <RulerToggle aria-label="标尺">
                        <svg width="12" height="11" viewBox="0 0 12 11">
                            <path d="M0 0h10v7H5V5H0z" fill="#e8e8ea" /><path d="M2.500 1v2M5.500 1v2" stroke="#85848d" />
                            <path d="M7.500 4.500l4 3v3h-7v-3z" fill="#fff" stroke="#85848d" />
                        </svg>
                    </RulerToggle>
                    <ScrollButton aria-label="向上滚动">
                        <svg width="9" height="5" viewBox="0 0 9 5" fill="currentColor"><path d="M4.500 0L9 5H0z" /></svg>
                    </ScrollButton>
                    <ScrollThumb><i /><i /><i /></ScrollThumb>
                    <Spacer />
                    <ScrollButton aria-label="向下滚动">
                        <svg width="9" height="5" viewBox="0 0 9 5" fill="currentColor"><path d="M0 0h9L4.500 5z" /></svg>
                    </ScrollButton>
                    <ScrollButton aria-label="上一页">
                        <svg width="8" height="9" viewBox="0 0 8 9" fill="currentColor"><path d="M4 0l4 4H0zM4 4l4 4H0z" /></svg>
                    </ScrollButton>
                    <ScrollButton aria-label="选择浏览对象">
                        <svg width="8" height="8" viewBox="0 0 8 8" fill="none" stroke="currentColor"><circle cx="4" cy="4" r="3" /></svg>
                    </ScrollButton>
                    <ScrollButton aria-label="下一页">
                        <svg width="8" height="9" viewBox="0 0 8 9" fill="currentColor"><path d="M0 0h8L4 4zM0 4h8L4 8z" /></svg>
                    </ScrollButton>
                </ScrollTrack>
                <SidePane>
                    <PaneHandle />
                    <PaneList>
                        {paneItems.map(([icon, label]) => (
                            <PaneButton key={icon}>
                                <Icon name={icon} />
                                <span>{label}</span>
                            </PaneButton>
                        ))}
                    </PaneList>
                    <PaneMore aria-label="更多">
                        <svg width="8" height="5" viewBox="0 0 8 5" fill="none" stroke="currentColor"><path d="M.5.500L4 4 7.500.500" /></svg>
                    </PaneMore>
                </SidePane>
                <EdgeStrip>
                    <EdgeHandle aria-label="展开">
                        <svg width="3" height="6" viewBox="0 0 3 6" fill="currentColor"><path d="M0 0l3 3-3 3z" /></svg>
                    </EdgeHandle>
                </EdgeStrip>
                <SpeedBall>
                    <SpeedPercent>81<small>%</small></SpeedPercent>
                    <SpeedRate>
                        <svg width="5" height="8" viewBox="0 0 5 8" fill="none" stroke="#1ba548"><path d="M2.500 0v7M.5 5l2 2 2-2" /></svg>
                        0.1K/s
                    </SpeedRate>
                </SpeedBall>
                <BaiduMark />
            </WorkArea>

            <StatusBar>
                <StatusText $w={48}>页码: 1</StatusText>
                <StatusText $w={60}>页面: 1/1</StatusText>
                <StatusText $w={47}>节: 1/1</StatusText>
                <StatusText $w={96}>设置值: 19.2厘米</StatusText>
                <Line $h={12} $tone="#999" />
                <StatusText $w={35} $gap={3}>行: 8</StatusText>
                <StatusText $w={27}>列: 1</StatusText>
                <Line $h={12} $tone="#999" />
                <StatusText $w={56} $gap={7}>字数: 330</StatusText>
                <Line $h={12} $tone="#999" />
                <StatusCheck>拼写检查</StatusCheck>
                <Line $h={12} $tone="#999" />
                <StatusCheck>文档校对</StatusCheck>
                <Line $h={12} $tone="#999" />
                <Spacer />
                <ViewButton aria-label="全屏显示"><Icon name="fullView" size={14} /></ViewButton>
                <ViewButton $active aria-label="页面视图"><Icon name="printView" size={14} /></ViewButton>
                <ViewButton aria-label="大纲"><Icon name="outline" size={14} /></ViewButton>
                <ViewButton aria-label="网页版式"><Icon name="web" size={14} /></ViewButton>
                <ViewButton aria-label="护眼模式"><Icon name="eye" size={14} /></ViewButton>
                <StatusText $w={196} $gap={14}>120 %</StatusText>
                <ZoomButton aria-label="放大"><Icon name="plus" size={14} /></ZoomButton>
                <button aria-label="全屏"><Icon name="expand" size={14} /></button>
            </StatusBar>
        </Shell>
    )
}

export default App
